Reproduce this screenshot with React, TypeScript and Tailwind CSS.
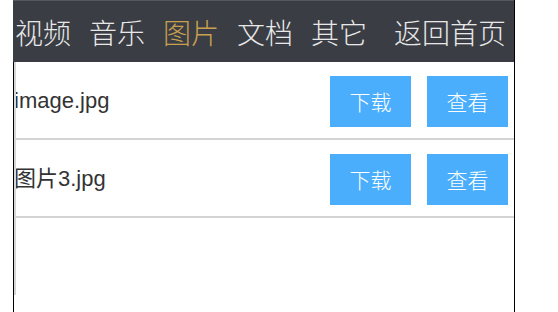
import React from 'react';

const tabs = [
  { label: '视频', active: false },
  { label: '音乐', active: false },
  { label: '图片', active: true },
  { label: '文档', active: false },
  { label: '其它', active: false },
];

const files = ['image.jpg', '图片3.jpg'];

const App: React.FC = () => {
  return (
    <div className="w-[558px] h-[312px] bg-white overflow-hidden [font-family:'Liberation_Sans','Noto_Sans_CJK_SC',sans-serif]">
      <div className="ml-[13px] w-[502px] h-full flex flex-col border-r border-black">
        <div className="h-[62px] bg-[#3a3d44] border-t border-[#55585e] flex items-center pl-[2px] pr-[8px] [font-family:'Noto_Sans_CJK_SC',sans-serif] text-[28px] font-light leading-none">
          <div className="flex gap-[18px]">
            {tabs.map((t) => (
              <span key={t.label} className={t.active ? 'text-[#c9a04f]' : 'text-[#e8e8e8]'}>
                {t.label}
              </span>
            ))}
          </div>
          <span className="ml-auto text-[#e8e8e8]">返回首页</span>
        </div>
        <div className="flex-1 border-l border-black relative">
          <div className="absolute left-0 top-0 w-[2px] h-[233px] bg-[#d6d6d6]" />
          {files.map((name) => (
            <div key={name} className="h-[78px] flex items-center border-b-2 border-[#d4d4d4] pr-[6px]">
              <span className="text-[22px] text-[#333] leading-none pt-[2px]">{name}</span>
              <div className="ml-auto flex gap-[16px] pt-[3px]">
                <button className="w-[81px] h-[51px] bg-[#4aaefc] text-white text-[21px] font-light [font-family:'Noto_Sans_CJK_SC',sans-serif]">
                  下载
                </button>
                <button className="w-[81px] h-[51px] bg-[#4aaefc] text-white text-[21px] font-light [font-family:'Noto_Sans_CJK_SC',sans-serif]">
                  查看
                </button>
              </div>
            </div>
          ))}
        </div>
      </div>
    </div>
  );
};

export default App;
